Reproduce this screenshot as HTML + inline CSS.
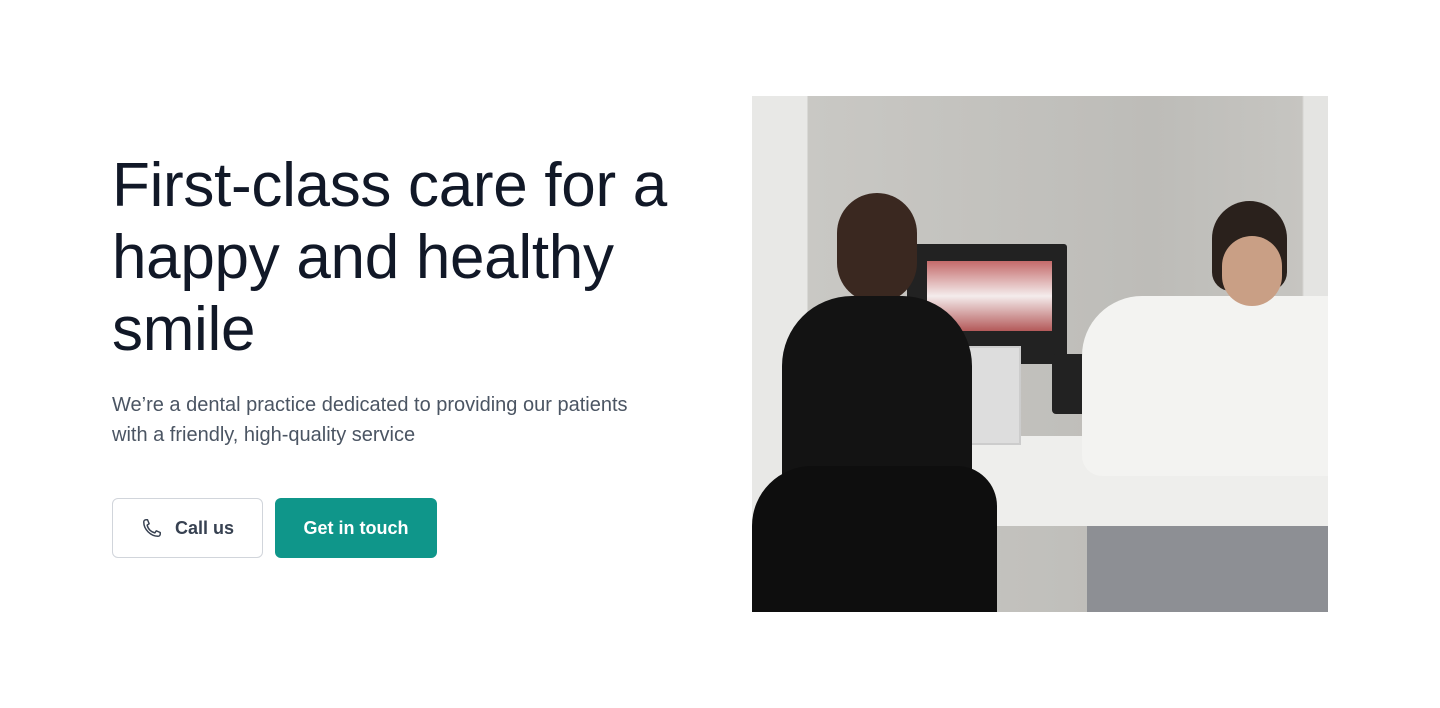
<!DOCTYPE html>
<html><head><style>
body{margin:0;width:1440px;height:708px;background:#fff;font-family:"Liberation Sans",sans-serif;position:relative;overflow:hidden}
h1{position:absolute;left:112px;top:150px;margin:0;font-size:62px;line-height:72px;font-weight:400;color:#111827;letter-spacing:-0.3px;width:600px}
p{position:absolute;left:112px;top:390px;margin:0;font-size:20px;line-height:30px;color:#4b5563;width:545px}
.b{position:absolute;top:498px;height:60px;border-radius:6px;box-sizing:border-box;display:flex;align-items:center;justify-content:center;font-size:18px;font-weight:700}
.c{left:112px;width:151px;border:1px solid #d1d5db;color:#374151;gap:12px}
.g{left:275px;width:162px;background:#0f968a;color:#fff}
.img{position:absolute;left:752px;top:96px;width:576px;height:516px;overflow:hidden;background:linear-gradient(90deg,#e8e8e6 0,#e8e8e6 55px,#c9c8c4 56px,#bdbcb8 400px,#c6c5c1 550px,#e4e4e2 552px)}
.img div{position:absolute}
</style></head><body>
<h1>First-class care for a happy and healthy smile</h1>
<p>We’re a dental practice dedicated to providing our patients with a friendly, high-quality service</p>
<div class="b c"><svg width="22" height="22" viewBox="0 0 24 24" fill="none" stroke="#374151" stroke-width="1.6" stroke-linejoin="round"><path d="M3 5.5C3 4 4 3 5.5 3h1.6l1.8 4.4-2.2 1.4a11 11 0 0 0 8.5 8.5l1.4-2.2 4.4 1.8v1.6c0 1.5-1 2.5-2.5 2.5C10.5 21 3 13.5 3 5.5z"/></svg>Call us</div>
<div class="b g">Get in touch</div>
<div class="img">
<div style="left:155px;top:148px;width:160px;height:120px;background:#222;border-radius:3px"></div>
<div style="left:175px;top:165px;width:125px;height:70px;background:linear-gradient(#c46a6a,#f4ecec 50%,#b45a5a)"></div>
<div style="left:300px;top:258px;width:90px;height:60px;background:#222;border-radius:4px"></div>
<div style="left:130px;top:340px;width:446px;height:90px;background:#eeeeec;border-radius:0 0 0 40px"></div>
<div style="left:170px;top:250px;width:95px;height:95px;background:#ddd;border:2px solid #ccc"></div>
<div style="left:330px;top:200px;width:246px;height:180px;background:#f3f3f1;border-radius:60px 0 0 20px"></div>
<div style="left:460px;top:105px;width:75px;height:90px;background:#2a211c;border-radius:40px 40px 20px 20px"></div>
<div style="left:470px;top:140px;width:60px;height:70px;background:#c99f85;border-radius:30px"></div>
<div style="left:335px;top:430px;width:241px;height:86px;background:#8d8f94"></div>
<div style="left:85px;top:97px;width:80px;height:110px;background:#3a2820;border-radius:40px"></div>
<div style="left:30px;top:200px;width:190px;height:200px;background:#131313;border-radius:70px 70px 10px 10px"></div>
<div style="left:0;top:370px;width:245px;height:146px;background:#0e0e0e;border-radius:60px 40px 0 0"></div>
</div>
</body></html>
